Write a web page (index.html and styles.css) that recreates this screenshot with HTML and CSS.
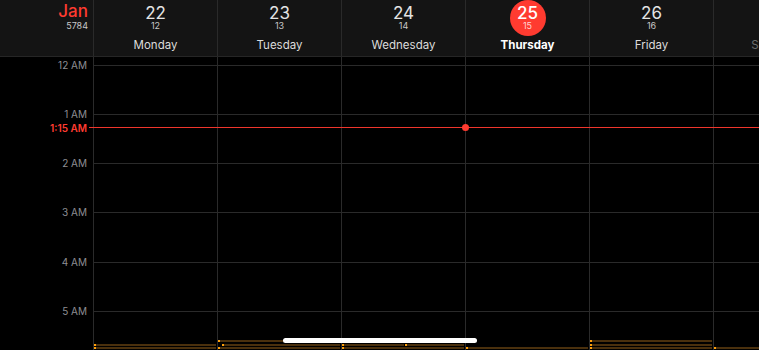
FILE: index.html
```html
<!DOCTYPE html>
<html>
<head>
<meta charset="utf-8">
<link rel="stylesheet" href="styles.css">
</head>
<body>
<div class="app">
  <header class="header">
    <div class="month">
      <div class="month-name">Jan</div>
      <div class="sub">5784</div>
    </div>
    <div class="day"><div class="num">22</div><div class="sub">12</div><div class="name">Monday</div></div>
    <div class="day"><div class="num">23</div><div class="sub">13</div><div class="name">Tuesday</div></div>
    <div class="day"><div class="num">24</div><div class="sub">14</div><div class="name">Wednesday</div></div>
    <div class="day today"><div class="badge"><div class="num">25</div><div class="sub">15</div></div><div class="name">Thursday</div></div>
    <div class="day"><div class="num">26</div><div class="sub">16</div><div class="name">Friday</div></div>
    <div class="day dim"><div class="num">27</div><div class="sub">17</div><div class="name">Saturday</div></div>
  </header>
  <main class="body">
    <div class="hours">
      <div class="hour"><div class="label">12 AM</div><div class="line"></div></div>
      <div class="hour"><div class="label">1 AM</div><div class="line"></div></div>
      <div class="hour"><div class="label">2 AM</div><div class="line"></div></div>
      <div class="hour"><div class="label">3 AM</div><div class="line"></div></div>
      <div class="hour"><div class="label">4 AM</div><div class="line"></div></div>
      <div class="hour"><div class="label">5 AM</div><div class="line"></div></div>
      <div class="hour"><div class="label">6 AM</div><div class="line"></div></div>
    </div>
    <div class="now">
      <div class="now-label">1:15 AM</div>
      <div class="now-line"><span class="now-dot"></span></div>
    </div>
    <div class="events">
      <div class="ecol">
        <div class="slot"></div>
        <div class="slot"><span class="bar"></span></div>
        <div class="slot"><span class="bar"></span></div>
      </div>
      <div class="ecol">
        <div class="slot"><span class="bar"></span></div>
        <div class="slot inset"><span class="bar"></span></div>
        <div class="slot"><span class="bar"></span></div>
      </div>
      <div class="ecol">
        <div class="slot"></div>
        <div class="slot split"><span class="bar"></span><span class="bar"></span></div>
        <div class="slot"><span class="bar"></span></div>
      </div>
      <div class="ecol">
        <div class="slot"></div>
        <div class="slot"></div>
        <div class="slot"><span class="bar"></span></div>
      </div>
      <div class="ecol">
        <div class="slot"><span class="bar"></span></div>
        <div class="slot"><span class="bar"></span></div>
        <div class="slot"><span class="bar"></span></div>
      </div>
      <div class="ecol">
        <div class="slot"></div>
        <div class="slot"></div>
        <div class="slot"><span class="bar"></span></div>
      </div>
    </div>
    <div class="home-indicator"></div>
  </main>
</div>
</body>
</html>
```
FILE: styles.css
```css
* { box-sizing: border-box; margin: 0; padding: 0; }
html, body { background: #000; }
body {
  width: 759px;
  height: 350px;
  overflow: hidden;
  font-family: Inter, "Noto Sans", sans-serif;
  color: #e0e0e0;
}
.app { width: 759px; height: 350px; display: flex; flex-direction: column; overflow: hidden; }

.header {
  height: 57px;
  flex: none;
  display: grid;
  grid-template-columns: 93px repeat(6, 124px);
  background: #141414;
  border-bottom: 1px solid #262626;
}
.month { padding: 2px 5px 0 0; text-align: right; }
.month-name { font-size: 17px; line-height: 18px; color: #ff3b30; font-weight: 500; }
.month .sub { margin-top: 1.7px; }
.sub { font-size: 9px; line-height: 8px; color: #c8c8c8; }

.day {
  border-left: 1px solid #2a2a2a;
  display: flex;
  flex-direction: column;
  align-items: center;
  padding-top: 4.7px;
  white-space: nowrap;
}
.num { font-size: 17px; line-height: 17px; color: #e4e4e4; }
.name { font-size: 11.5px; line-height: 14px; margin-top: 8.3px; color: #dcdcdc; }
.dim .num, .dim .sub, .dim .name { color: #6e6e6e; }

.today { padding-top: 0; }
.badge {
  width: 36px; height: 36px;
  border-radius: 50%;
  background: #ff3b30;
  display: flex; flex-direction: column; align-items: center;
  padding-top: 4.7px;
}
.today .num { color: #fff; font-weight: 500; }
.today .sub { color: #ffd4d0; }
.today .name { margin-top: 2.3px; color: #fff; font-weight: 700; }

.body {
  flex: 1;
  position: relative;
  background-color: #000;
  background-image: linear-gradient(to right, #2a2a2a 1px, transparent 1px);
  background-size: 124px 100%;
  background-position: 93px 0;
  background-repeat: repeat-x;
}
.hours { padding-top: 7.5px; }
.hour { display: flex; height: 49.3px; }
.label {
  width: 93px;
  flex: none;
  text-align: right;
  padding-right: 6px;
  font-size: 10px;
  line-height: 12px;
  margin-top: -6px;
  height: 12px;
  color: #8e8e93;
}
.line { flex: 1; border-top: 1px solid #2a2a2a; }

.now {
  position: absolute;
  top: 64px;
  left: 0; right: 0;
  display: flex;
  align-items: center;
  height: 13px;
}
.now-label {
  width: 89px;
  padding-right: 2px;
  text-align: right;
  font-size: 10px;
  line-height: 12px;
  font-weight: 600;
  color: #ff3b30;
}
.now-line { flex: 1; height: 1px; border-top: 1px solid #f0362c; position: relative; }
.now-dot {
  position: absolute;
  left: 372.5px;
  top: -4px;
  width: 7px; height: 7px;
  border-radius: 50%;
  background: #ff3b30;
}

.events {
  position: absolute;
  left: 93px;
  top: 283.3px;
  display: grid;
  grid-template-columns: repeat(6, 124px);
}
.ecol { display: flex; flex-direction: column; padding-right: 1px; }
.slot { height: 3.3px; display: flex; }
.bar {
  flex: 1;
  height: 2px;
  background: #4a300d;
  border-left: 2px solid #ff9f0a;
  margin-left: 1px;
}
.slot.inset .bar { margin-left: 5px; }
.slot.split .bar:first-child { flex: 0 0 62px; margin-right: 0; }

.home-indicator {
  position: absolute;
  left: 283px;
  top: 281px;
  width: 194px;
  height: 5px;
  border-radius: 3px;
  background: #fff;
}
```
